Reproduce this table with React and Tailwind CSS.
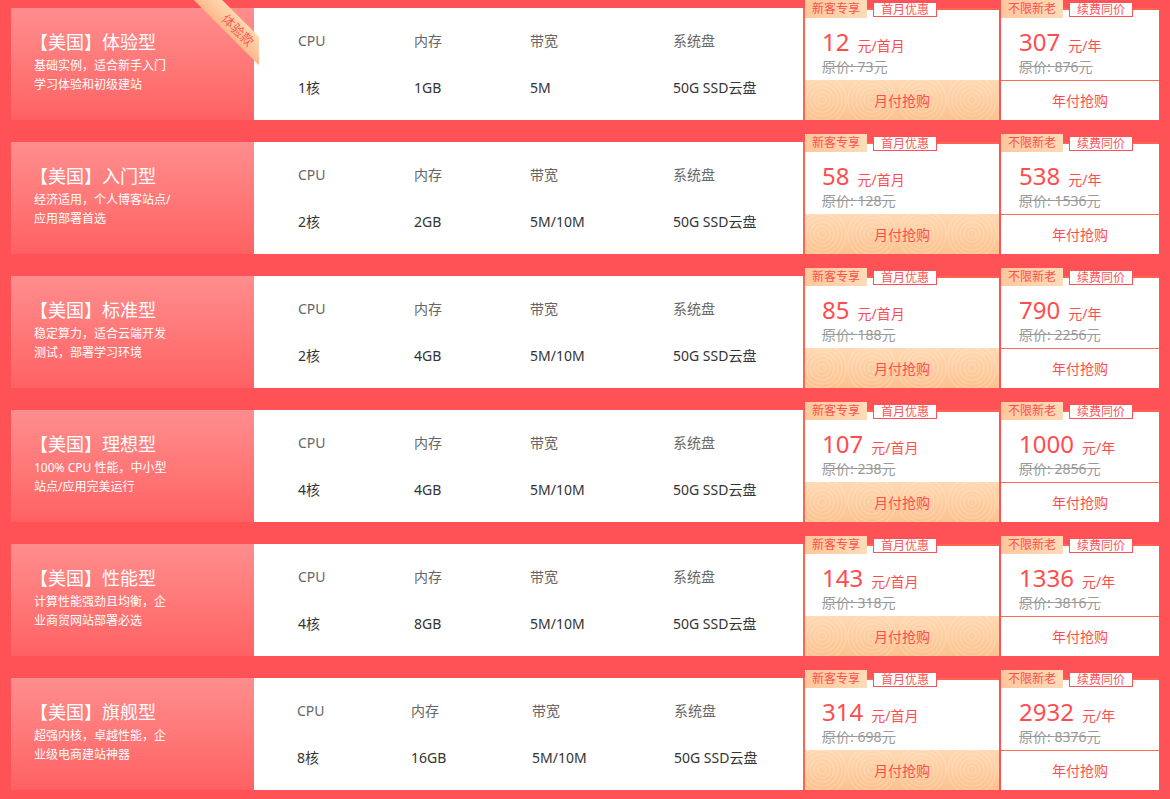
const rows = [
  { name: "体验型", d1: "基础实例，适合新手入门", d2: "学习体验和初级建站", cpu: "1核", mem: "1GB", bw: "5M", m: "12", mo: "73", y: "307", yo: "876" },
  { name: "入门型", d1: "经济适用，个人博客站点/", d2: "应用部署首选", cpu: "2核", mem: "2GB", bw: "5M/10M", m: "58", mo: "128", y: "538", yo: "1536" },
  { name: "标准型", d1: "稳定算力，适合云端开发", d2: "测试，部署学习环境", cpu: "2核", mem: "4GB", bw: "5M/10M", m: "85", mo: "188", y: "790", yo: "2256" },
  { name: "理想型", d1: "100% CPU 性能，中小型", d2: "站点/应用完美运行", cpu: "4核", mem: "4GB", bw: "5M/10M", m: "107", mo: "238", y: "1000", yo: "2856" },
  { name: "性能型", d1: "计算性能强劲且均衡，企", d2: "业商贸网站部署必选", cpu: "4核", mem: "8GB", bw: "5M/10M", m: "143", mo: "318", y: "1336", yo: "3816" },
  { name: "旗舰型", d1: "超强内核，卓越性能，企", d2: "业级电商建站神器", cpu: "8核", mem: "16GB", bw: "5M/10M", m: "314", mo: "698", y: "2932", yo: "8376" },
];

function Pattern({ id }) {
  return (
    <svg className="absolute inset-0 w-full h-full" aria-hidden="true">
      <defs>
        <pattern id={id} width="50" height="44" patternUnits="userSpaceOnUse" x="-8" y="-2">
          {[4, 8, 12, 16, 20, 24].map((r) => (
            <circle key={r} cx="25" cy="22" r={r} fill="none" stroke="#fff" strokeOpacity="0.2" strokeWidth="1.2" />
          ))}
        </pattern>
      </defs>
      <rect width="100%" height="100%" fill={`url(#${id})`} />
    </svg>
  );
}

function Ribbon() {
  return (
    <div className="absolute right-[-5px] top-[-8px] w-[72px] h-[72px] overflow-hidden z-10">
      <div className="absolute left-[-4px] top-[20px] w-[110px] h-[20px] rotate-45 bg-gradient-to-b from-[#ffd9b0] to-[#fbb98b] flex items-center justify-center text-[13px] leading-none text-[#ff5a5a]">
        体验款
      </div>
    </div>
  );
}

function Row({ r, i }) {
  const last = i === rows.length - 1;
  return (
    <div className="flex h-[112px] ml-[11px]">
      <div className="relative w-[243px] shrink-0 bg-gradient-to-b from-[#ff8d8d] to-[#ff6163] pl-[23px] pt-[22px] text-white">
        <div className="text-[18px] leading-[24px] -ml-[4px]">【美国】{r.name}</div>
        <div className="mt-[2px] text-[12px] leading-[19px]">
          <div>{r.d1}</div>
          <div>{r.d2}</div>
        </div>
        {i === 0 && <Ribbon />}
      </div>
      <div className={`w-[549px] shrink-0 bg-white pt-[23px] text-[14px] ${last ? "pl-[43px]" : "pl-[44px]"}`}>
        <div className={`grid grid-rows-[20px_20px] gap-y-[27px] leading-[20px] ${last ? "grid-cols-[114px_121px_142px_1fr]" : "grid-cols-[116px_116px_143px_1fr]"}`}>
          <div className="text-[#666]">CPU</div>
          <div className="text-[#666]">内存</div>
          <div className="text-[#666]">带宽</div>
          <div className="text-[#666]">系统盘</div>
          <div className="text-[#333]">{r.cpu}</div>
          <div className="text-[#333]">{r.mem}</div>
          <div className="text-[#333]">{r.bw}</div>
          <div className="text-[#333]">50G SSD云盘</div>
        </div>
      </div>
      <div className="relative w-[196px] shrink-0 bg-white border-l-2 border-t-2 border-[#ff6450] flex flex-col">
        <div className="absolute left-0 top-[-10px] w-[62px] h-[18px] bg-gradient-to-r from-[#ffc79c] to-[#ffdcb8] text-[12px] leading-[18px] text-[#ff4d4f] text-center">新客专享</div>
        <div className="absolute left-[68px] top-[-8px] w-[64px] h-[15px] bg-white border border-[#ff5257] text-[12px] leading-[13px] text-[#ff5257] text-center">首月优惠</div>
        <div className="h-[70px] pl-[17px] pt-[18px]">
          <div className="leading-[28px] text-[#ff4d4f] whitespace-nowrap">
            <span className="text-[24px]">{r.m}</span>
            <span className="text-[14px] ml-[8px]">元/首月</span>
          </div>
          <div className="-mt-[3px] text-[14px] leading-[20px] text-[#999] line-through">原价: {r.mo}元</div>
        </div>
        <div className="relative flex-1 overflow-hidden bg-gradient-to-b from-[#ffd9b3] to-[#fcc28f] flex items-center justify-center">
          <Pattern id={`pat${i}`} />
          <span className="relative text-[14px] text-[#ff4d4f]">月付抢购</span>
        </div>
      </div>
      <div className="relative ml-[2px] w-[158px] shrink-0 bg-white border-t-2 border-[#ff6450] flex flex-col">
        <div className="absolute left-0 top-[-10px] w-[62px] h-[18px] bg-gradient-to-r from-[#ffc79c] to-[#ffdcb8] text-[12px] leading-[18px] text-[#ff4d4f] text-center">不限新老</div>
        <div className="absolute left-[68px] top-[-8px] w-[64px] h-[15px] bg-white border border-[#ff5257] text-[12px] leading-[13px] text-[#ff5257] text-center">续费同价</div>
        <div className="h-[70px] pl-[18px] pt-[18px]">
          <div className="leading-[28px] text-[#ff4d4f] whitespace-nowrap">
            <span className="text-[24px]">{r.y}</span>
            <span className="text-[14px] ml-[8px]">元/年</span>
          </div>
          <div className="-mt-[3px] text-[14px] leading-[20px] text-[#999] line-through">原价: {r.yo}元</div>
        </div>
        <div className="flex-1 border-t border-[#ff6b55] flex items-center justify-center text-[14px] text-[#ff4d4f]">
          年付抢购
        </div>
      </div>
    </div>
  );
}

export default function App() {
  return (
    <div className="min-h-screen w-[1170px] bg-[#ff5257] pt-[8px] font-['Noto_Sans','Noto_Sans_CJK_SC',sans-serif]">
      <div className="flex flex-col gap-[22px]">
        {rows.map((r, i) => (
          <Row key={i} r={r} i={i} />
        ))}
      </div>
    </div>
  );
}
